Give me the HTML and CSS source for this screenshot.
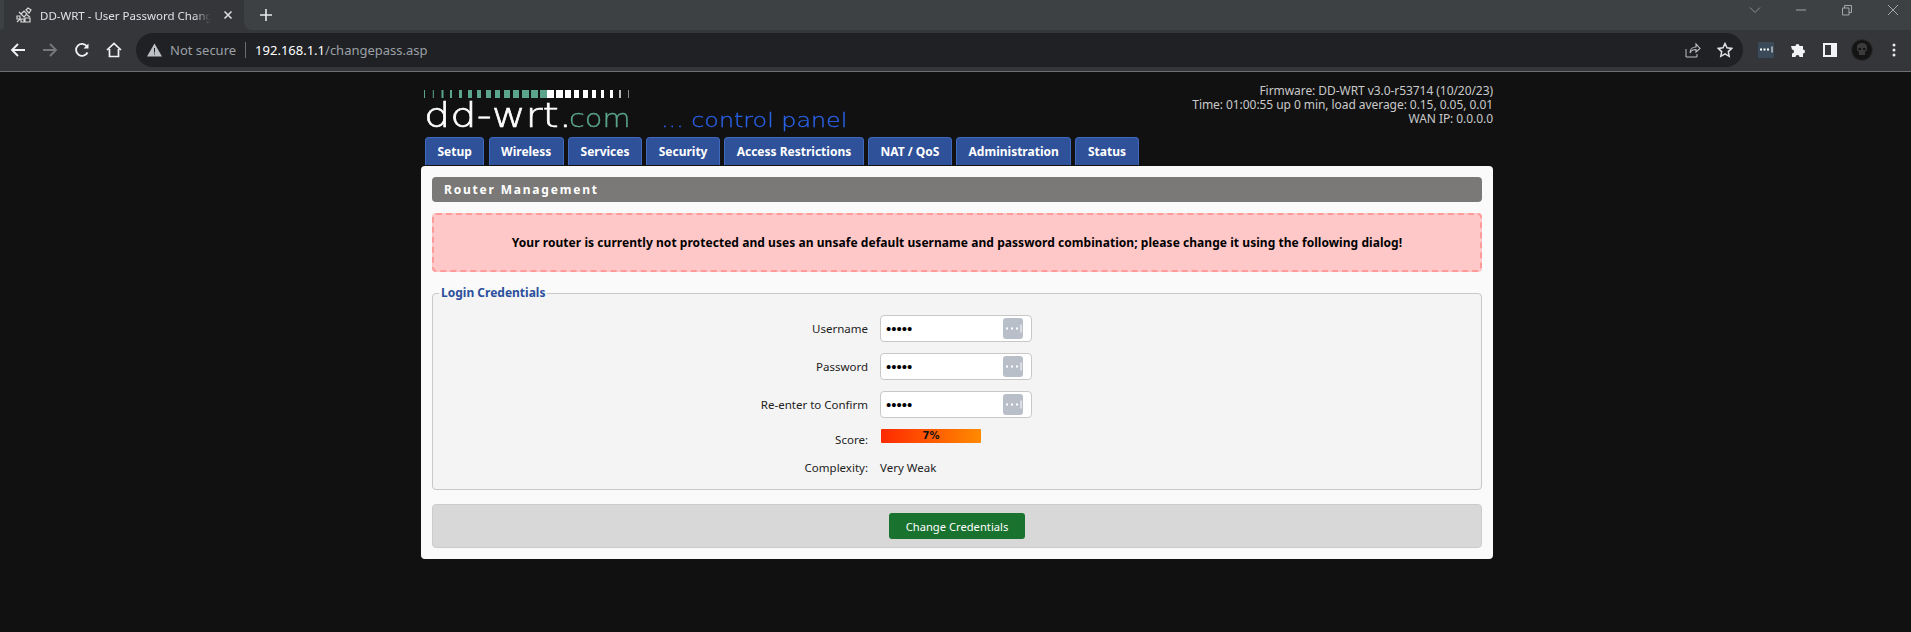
FILE: index.html
```html
<!DOCTYPE html>
<html lang="en">
<head>
    <meta charset="UTF-8">
    <title>DD-WRT - User Password Change</title>
    <link rel="stylesheet" href="styles.css">
</head>
<body>
    <div class="tabstrip">
        <div class="strip-edge"></div>
        <div class="browser-tab">
            <svg class="favicon" width="16" height="16" viewBox="0 0 16 16"><g fill="none" stroke="#d8d8d8" stroke-width="1.2"><path d="M1 9h3v3H1zM5 12h3v3H5zM9 11h5v4H9zM5 7l3-3 3 3-3 3zM10 3l2-2 3 2-2 3z"/><path d="M1 15l3-3M3 5l2 2M11 8l3 2"/></g></svg>
            <span class="tab-title">DD-WRT - User Password Chang</span>
            <svg class="tab-close" width="10" height="10" viewBox="0 0 10 10"><path d="M1.5 1.5l7 7M8.5 1.5l-7 7" stroke="#dcdcdc" stroke-width="1.6"/></svg>
        </div>
        <div class="strip-rest">
            <svg class="new-tab" width="14" height="14" viewBox="0 0 14 14"><path d="M7 1v12M1 7h12" stroke="#e8eaed" stroke-width="1.6"/></svg>
            <div class="win-controls">
                <svg width="12" height="12" viewBox="0 0 12 12"><path d="M1 3.5l5 5 5-5" fill="none" stroke="#8b8e91"/></svg>
                <svg width="12" height="12" viewBox="0 0 12 12"><path d="M1 6h10" stroke="#a4a6a8"/></svg>
                <svg width="12" height="12" viewBox="0 0 12 12"><path d="M1.5 4h6.500v7h-6.500zM3.500 4v-2.500h7v7h-2.500" fill="none" stroke="#a4a6a8"/></svg>
                <svg width="12" height="12" viewBox="0 0 12 12"><path d="M1 1l10 10M11 1l-10 10" stroke="#a4a6a8"/></svg>
            </div>
        </div>
    </div>

    <div class="toolbar">
        <div class="nav-btns">
            <svg width="16" height="16" viewBox="0 0 16 16"><path d="M15 8H2M8 2L2 8l6 6" fill="none" stroke="#f1f3f4" stroke-width="1.8"/></svg>
            <svg width="16" height="16" viewBox="0 0 16 16"><path d="M1 8h13M8 2l6 6-6 6" fill="none" stroke="#76787b" stroke-width="1.800"/></svg>
            <svg width="16" height="16" viewBox="0 0 16 16"><path d="M13.500 10.500A6 6 0 1 1 13 4.500" fill="none" stroke="#f1f3f4" stroke-width="1.800"/><path d="M14.500 1.500v5h-5z" fill="#f1f3f4"/></svg>
            <svg width="18" height="18" viewBox="0 0 18 18"><path d="M2 9l7-6.500L16 9M4.500 8v7.500h9V8" fill="none" stroke="#f1f3f4" stroke-width="1.700"/></svg>
        </div>
        <div class="omnibox">
            <svg width="15" height="14" viewBox="0 0 15 14"><path d="M7.500 0.500L15 13.500H0z" fill="#bdc1c6"/><path d="M7 5h1v4.500H7zM7 10.500h1v1H7z" fill="#202124"/></svg>
            <span class="not-secure">Not secure</span>
            <span class="omni-sep"></span>
            <span class="url"><b>192.168.1.1</b>/changepass.asp</span>
            <div class="omni-right">
                <svg width="16" height="16" viewBox="0 0 16 16"><path d="M1 7v8h11v-3" fill="none" stroke="#bdc1c6"/><path d="M5 11c0-4 3-6 6-6V2l4 4.500L11 10V7.500c-3 0-5 1-6 3.500z" fill="none" stroke="#bdc1c6" stroke-width="1.100"/></svg>
                <svg width="16" height="16" viewBox="0 0 16 16"><path d="M8 1.500l2 4.300 4.700.6-3.400 3.200.9 4.700L8 11.900l-4.200 2.400.9-4.700L1.300 6.400 6 5.800z" fill="none" stroke="#dfe1e5" stroke-width="1.500"/></svg>
            </div>
        </div>
        <div class="ext-btns">
            <span class="ext-key"><svg width="16" height="16" viewBox="0 0 16 16"><path d="M2 6.500h2v2H2zM5.500 6.500h2v2h-2zM9 6.500h2v2H9z" fill="#fff"/><path d="M14 4.500v6" stroke="#fff"/></svg></span>
            <svg width="16" height="16" viewBox="0 0 16 16"><path d="M0 4h4.500a2 2 0 0 1 4 0H12v3.500a2 2 0 0 1 0 4V15H8.500a2 2 0 0 0-4 0H1v-3.500a2 2 0 0 0 0-4z" transform="translate(1 0)" fill="#f1f3f4"/></svg>
            <svg width="14" height="14" viewBox="0 0 14 14"><path d="M0 0h14v14H0zM2 2v10h6V2z" fill="#f1f3f4" fill-rule="evenodd"/></svg>
            <svg width="22" height="22" viewBox="0 0 22 22"><circle cx="11" cy="11" r="10.500" fill="#141414" stroke="#2c2c2c"/><path d="M6 8c0-3 2.500-4 5-4s5 1 5 4v3l-2 2v3H8v-3l-2-2z" fill="#3b3b3b"/><path d="M7.500 9h2.500v2H7.500zM12 9h2.500v2H12z" fill="#141414"/></svg>
            <svg width="4" height="14" viewBox="0 0 4 14"><circle cx="2" cy="2" r="1.500" fill="#e8eaed"/><circle cx="2" cy="7" r="1.500" fill="#e8eaed"/><circle cx="2" cy="12" r="1.500" fill="#e8eaed"/></svg>
        </div>
    </div>

    <div class="page">
        <div class="header">
            <div class="logo">
                <svg class="meter" width="208" height="8" viewBox="0 0 208 8">
                    <g fill="#5aa58c">
                        <rect x="0" width="1" height="8"/><rect x="8.800" width="1" height="8"/><rect x="17.500" width="2" height="8"/><rect x="26" width="2" height="8"/><rect x="35" width="3" height="8"/><rect x="44" width="4" height="8"/><rect x="53" width="4" height="8"/><rect x="62" width="5" height="8"/><rect x="71" width="5" height="8"/><rect x="80" width="6" height="8"/><rect x="89" width="6" height="8"/><rect x="98" width="7" height="8"/><rect x="107" width="7" height="8"/><rect x="116" width="7" height="8"/>
                    </g>
                    <g fill="#fff">
                        <rect x="123" width="7" height="8"/><rect x="132" width="7" height="8"/><rect x="141" width="6" height="8"/><rect x="150" width="5" height="8"/><rect x="159" width="5" height="8"/><rect x="168" width="4" height="8"/><rect x="177" width="3" height="8"/><rect x="186" width="3" height="8"/>
                        <rect x="195" width="2" height="8" fill="#bbb"/><rect x="204" width="1" height="8" fill="#888"/>
                    </g>
                </svg>
                <div class="logo-text"><span class="logo-dd">dd-wrt.</span><span class="logo-com">com</span><span class="logo-cp">... control panel</span></div>
            </div>
            <div class="sysinfo">
                <div>Firmware: DD-WRT v3.0-r53714 (10/20/23)</div>
                <div>Time: 01:00:55 up 0 min, load average: 0.15, 0.05, 0.01</div>
                <div>WAN IP: 0.0.0.0</div>
            </div>
        </div>
        <ul class="menu">
            <li>Setup</li>
            <li>Wireless</li>
            <li>Services</li>
            <li>Security</li>
            <li>Access Restrictions</li>
            <li>NAT / QoS</li>
            <li>Administration</li>
            <li>Status</li>
        </ul>
        <div class="panel">
            <h2 class="panel-title">Router Management</h2>
            <div class="warning">Your router is currently not protected and uses an unsafe default username and password combination; please change it using the following dialog!</div>
            <fieldset class="creds">
                <legend>Login Credentials</legend>
                <div class="form-grid">
                    <label>Username</label>
                    <div class="pw-wrap">
                        <input class="pw-input" type="password" value="admin">
                        <span class="pw-key"><svg width="20" height="21" viewBox="0 0 20 21"><path d="M3 9.500h2v2H3zM8 9.500h2v2H8zM13 9.500h2v2h-2z" fill="#fff"/><path d="M18 6.500v8" stroke="#fff"/></svg></span>
                    </div>
                    <label>Password</label>
                    <div class="pw-wrap">
                        <input class="pw-input" type="password" value="admin">
                        <span class="pw-key"><svg width="20" height="21" viewBox="0 0 20 21"><path d="M3 9.500h2v2H3zM8 9.500h2v2H8zM13 9.500h2v2h-2z" fill="#fff"/><path d="M18 6.500v8" stroke="#fff"/></svg></span>
                    </div>
                    <label>Re-enter to Confirm</label>
                    <div class="pw-wrap">
                        <input class="pw-input" type="password" value="admin">
                        <span class="pw-key"><svg width="20" height="21" viewBox="0 0 20 21"><path d="M3 9.500h2v2H3zM8 9.500h2v2H8zM13 9.500h2v2h-2z" fill="#fff"/><path d="M18 6.500v8" stroke="#fff"/></svg></span>
                    </div>
                    <label class="score-label">Score:</label>
                    <div class="score-bar">7%</div>
                    <label>Complexity:</label>
                    <div>Very Weak</div>
                </div>
            </fieldset>
            <div class="submit-bar">
                <button class="btn-green" type="button">Change Credentials</button>
            </div>
        </div>
    </div>
</body>
</html>
```

FILE: styles.css
```css
* {
    box-sizing: border-box;
}
html, body {
    height: 100%;
}
body {
    margin: 0;
    background-color: #111111;
    font-family: "Noto Sans", sans-serif;
    overflow: hidden;
}

/* browser chrome */
.tabstrip {
    display: flex;
    height: 30px;
    background-color: #35363a;
}
.strip-edge {
    width: 4px;
    background-color: #3d4144;
    border-radius: 0 0 6px 0;
}
.browser-tab {
    display: flex;
    align-items: center;
    width: 240px;
    padding-left: 12px;
    color: #dee1e6;
    font-size: 11.5px;
}
.favicon {
    flex: none;
}
.tab-title {
    width: 171px;
    margin-left: 8px;
    white-space: nowrap;
    -webkit-mask-image: linear-gradient(to right, #000 90%, transparent);
    mask-image: linear-gradient(to right, #000 90%, transparent);
}
.tab-close {
    flex: none;
    margin-left: 12px;
}
.strip-rest {
    flex: 1;
    display: flex;
    align-items: center;
    background-color: #3d4144;
    border-radius: 0 0 0 8px;
}
.new-tab {
    margin-left: 15px;
}
.win-controls {
    display: flex;
    gap: 34px;
    margin-left: auto;
    margin-right: 12px;
    margin-top: -10px;
}
.toolbar {
    display: flex;
    align-items: center;
    height: 42px;
    padding-bottom: 1px;
    background-color: #35363a;
    border-bottom: 1px solid #6e6e6e;
}
.nav-btns {
    display: grid;
    grid-auto-flow: column;
    grid-auto-columns: 32px;
    justify-items: center;
    align-items: center;
    width: 136px;
    padding-left: 2px;
}
.omnibox {
    display: flex;
    align-items: center;
    width: 1607px;
    height: 34px;
    padding: 0 11px;
    background-color: #202124;
    border-radius: 17px;
    font-size: 13px;
}
.not-secure {
    margin-left: 8px;
    color: #9aa0a6;
}
.omni-sep {
    width: 1px;
    height: 16px;
    margin: 0 9px;
    background-color: #6b6e72;
}
.url {
    color: #9aa0a6;
}
.url b {
    color: #ffffff;
    font-weight: 400;
}
.omni-right {
    display: flex;
    gap: 16px;
    margin-left: auto;
    margin-right: -1px;
}
.ext-btns {
    display: grid;
    grid-auto-flow: column;
    grid-auto-columns: 32px;
    justify-items: center;
    align-items: center;
    margin-left: 7px;
}
.ext-key {
    display: flex;
    align-items: center;
    justify-content: center;
    width: 16px;
    height: 16px;
    background-color: #3a4a58;
    border-radius: 1px;
}

/* router page */
.page {
    width: 1072px;
    margin-left: 421px;
}
.header {
    display: flex;
    justify-content: space-between;
    height: 65px;
}
.logo {
    padding: 18px 0 0 3px;
}
.meter {
    display: block;
}
.logo-text {
    display: flex;
    align-items: baseline;
    height: 36px;
    margin-top: -3px;
    font-family: "DejaVu Sans", sans-serif;
    font-weight: 200;
    white-space: nowrap;
}
.logo-dd, .logo-com, .logo-cp {
    display: inline-block;
    transform-origin: left bottom;
}
.logo-dd {
    width: 145px;
    font-size: 34px;
    color: #ffffff;
    -webkit-text-stroke: 0.6px #ffffff;
    transform: scaleX(1.22);
}
.logo-com {
    width: 63px;
    font-size: 24px;
    color: #5aa58c;
    -webkit-text-stroke: 0.3px #5aa58c;
    transform: scaleX(1.2);
}
.logo-cp {
    margin-left: 29px;
    font-size: 20px;
    color: #2a62e8;
    -webkit-text-stroke: 0.3px #2a62e8;
    transform: scaleX(1.19);
}
.sysinfo {
    padding-top: 12px;
    text-align: right;
    color: #c9c9c9;
    font-size: 12px;
    letter-spacing: -0.06px;
    line-height: 14px;
}
.menu {
    display: flex;
    gap: 4.2px;
    height: 28px;
    margin: 0 0 1px 4px;
    padding: 0;
    list-style: none;
}
.menu li {
    height: 28px;
    padding: 0 11.5px;
    background-color: #2f5199;
    border: 1px solid #4169bd;
    border-bottom: none;
    border-radius: 4px 4px 0 0;
    color: #ffffff;
    font-size: 12px;
    font-weight: 700;
    line-height: 27px;
}
.panel {
    height: 393px;
    padding: 11px;
    background-color: #fafafa;
    border-radius: 4px;
    font-size: 11.5px;
    color: #222222;
}
.panel-title {
    height: 25px;
    margin: 0 0 11px;
    padding-left: 12px;
    background-color: #7a7977;
    border-radius: 4px;
    color: #ffffff;
    font-size: 12px;
    font-weight: 700;
    letter-spacing: 1.8px;
    line-height: 25px;
}
.warning {
    height: 59px;
    background-color: #ffc8c8;
    border: 2px dashed #ff9a9a;
    border-radius: 4px;
    color: #000000;
    font-size: 12px;
    font-weight: 700;
    letter-spacing: 0.05px;
    line-height: 56px;
    text-align: center;
}
.creds {
    height: 204px;
    margin: 14px 0 14px;
    padding: 0;
    background-color: #f4f4f4;
    border: 1px solid #c8c8c8;
    border-radius: 4px;
}
.creds legend {
    margin-left: 6px;
    padding: 0 2px;
    color: #2b4f9c;
    font-size: 12px;
    font-weight: 700;
    line-height: 14px;
}
.form-grid {
    display: grid;
    grid-template-columns: 435px 152px;
    grid-template-rows: 27px 27px 27px 14px 14px;
    column-gap: 12px;
    row-gap: 11px;
    align-items: center;
    padding-top: 15px;
}
.form-grid label {
    text-align: right;
}
.score-label {
    position: relative;
    top: 3px;
}
.form-grid > :nth-last-child(-n+2) {
    margin-top: 12px;
}
.pw-wrap {
    position: relative;
    height: 27px;
}
.pw-input {
    width: 152px;
    height: 27px;
    padding: 0 30px 0 5px;
    background-color: #ffffff;
    border: 1px solid #c8c8c8;
    border-radius: 4px;
    font-family: "Liberation Sans", sans-serif;
    font-size: 15px;
    color: #000000;
}
.pw-key {
    position: absolute;
    top: 3px;
    right: 9px;
    width: 20px;
    height: 21px;
    background-color: #b8bfc9;
    border-radius: 3px;
}
.score-bar {
    width: 100px;
    height: 14px;
    margin-left: 1px;
    background: linear-gradient(to right, #ff2a00, #ff8a00);
    border-radius: 1px;
    color: #111111;
    font-family: "DejaVu Sans", sans-serif;
    font-size: 10px;
    font-weight: 700;
    line-height: 13px;
    text-align: center;
}
.submit-bar {
    display: flex;
    align-items: center;
    justify-content: center;
    height: 44px;
    background-color: #d8d8d8;
    border: 1px solid #cccccc;
    border-radius: 4px;
}
.btn-green {
    width: 136px;
    height: 26px;
    padding: 0;
    background-color: #1a722f;
    border: none;
    border-radius: 3px;
    color: #ffffff;
    font-family: "Noto Sans", sans-serif;
    font-size: 11.2px;
}
```
